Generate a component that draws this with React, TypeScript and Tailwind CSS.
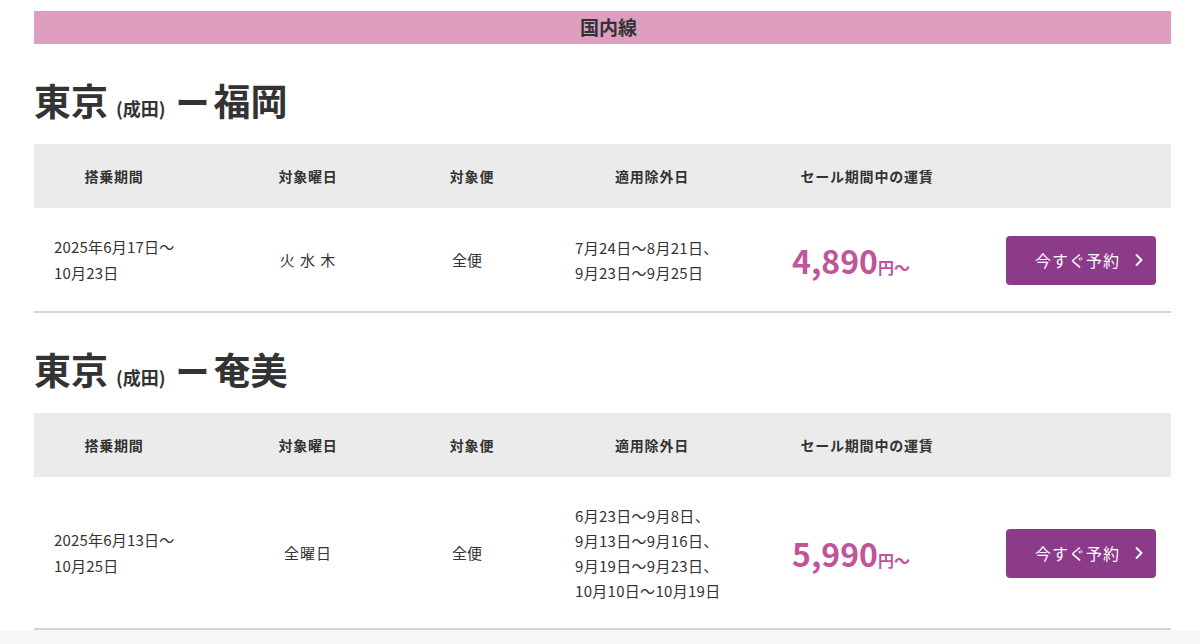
import { ChevronRight } from 'lucide-react';

type Route = {
    to: string;
    period: string[];
    days: string;
    flights: string;
    excluded: string[];
    price: string;
};

const routes: Route[] = [
    {
        to: '福岡',
        period: ['2025年6月17日〜', '10月23日'],
        days: '火 水 木',
        flights: '全便',
        excluded: ['7月24日〜8月21日、', '9月23日〜9月25日'],
        price: '4,890',
    },
    {
        to: '奄美',
        period: ['2025年6月13日〜', '10月25日'],
        days: '全曜日',
        flights: '全便',
        excluded: ['6月23日〜9月8日、', '9月13日〜9月16日、', '9月19日〜9月23日、', '10月10日〜10月19日'],
        price: '5,990',
    },
];

const cols = 'grid grid-cols-[160px_228px_100px_260px_170px_1fr]';

function RouteTable({ route }: { route: Route }) {
    return (
        <section>
            <h2 className="flex items-baseline h-[100px] pt-[31px] font-bold text-[#333333]">
                <span className="text-[37px] leading-[50px]">東京</span>
                <span className="text-[18px] ml-[8px]">(成田)</span>
                <span className="text-[34px] leading-[50px] ml-[10px]">ー</span>
                <span className="text-[37px] leading-[50px] ml-[4px]">{route.to}</span>
            </h2>

            <div className={`${cols} h-[64px] items-center bg-[#ebebeb] text-[14px] tracking-[0.8px] font-bold text-[#333333]`}>
                <div className="text-center">搭乗期間</div>
                <div className="text-center">対象曜日</div>
                <div className="text-center">対象便</div>
                <div className="text-center">適用除外日</div>
                <div className="text-center">セール期間中の運賃</div>
                <div />
            </div>

            <div className={`${cols} items-center pt-[26px] pb-[25px] border-b-2 border-[#d4d4d4] text-[15px] leading-[26px] text-[#333333]`}>
                <div className="pl-[20px] tracking-[0.2px]">
                    {route.period.map((line) => (
                        <div key={line}>{line}</div>
                    ))}
                </div>
                <div className="text-center tracking-[1px]">{route.days}</div>
                <div className="text-center pr-[10px]">{route.flights}</div>
                <div className="pl-[53px] leading-[25px] tracking-[0.3px]">
                    {route.excluded.map((line) => (
                        <div key={line}>{line}</div>
                    ))}
                </div>
                <div className="pl-[10px] text-[#c0559b] font-bold whitespace-nowrap">
                    <span className="text-[32px] leading-[40px]">{route.price}</span>
                    <span className="text-[16px]">円〜</span>
                </div>
                <div className="flex justify-end pr-[15px]">
                    <button className="flex items-center justify-end w-[150px] h-[49px] rounded-[4px] bg-[#8c3a8a] text-white text-[16px] tracking-[1px] pr-[7px]">
                        今すぐ予約
                        <ChevronRight className="ml-[9px]" size={20} strokeWidth={2.2} />
                    </button>
                </div>
            </div>
        </section>
    );
}

export default function App() {
    return (
        <main
            className="min-h-screen bg-white"
            style={{ fontFamily: '"Noto Sans CJK JP", "Noto Sans", sans-serif' }}
        >
            <div className="pt-[11px] pl-[34px] pr-[29px]">
                <div className="h-[33px] flex items-center justify-center pl-[12px] bg-[#dd9ebf] text-[19px] font-bold text-[#333333]">
                    国内線
                </div>

                {routes.map((route) => (
                    <RouteTable key={route.to} route={route} />
                ))}
            </div>
            <div className="h-[20px] bg-[#f7f7f7]" />
        </main>
    );
}
